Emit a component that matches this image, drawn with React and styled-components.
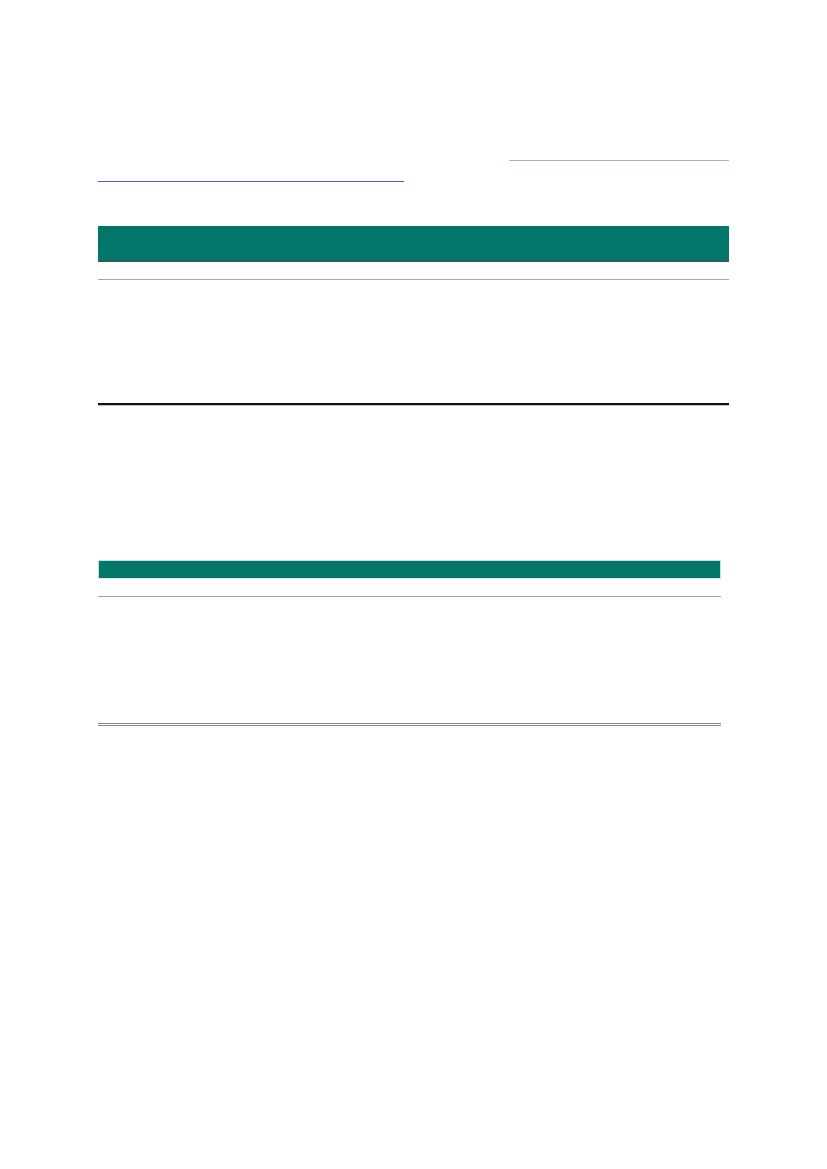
import React from "react";
import styled, { createGlobalStyle } from "styled-components";

const Global = createGlobalStyle`
  html, body { margin: 0; padding: 0; background: #ffffff; }
  body { font-family: "Liberation Sans", Arial, sans-serif; }
`;

const Page = styled.div`
  width: 827px;
  min-height: 1169px;
  box-sizing: border-box;
  padding: 148px 98px 0 98px;
  display: flex;
  flex-direction: column;
`;

const Para = styled.div`
  display: flex;
  flex-direction: column;
`;

const Line = styled.div`
  height: 21px;
  display: flex;
  justify-content: ${(p) => (p.$end ? "flex-end" : "flex-start")};
  align-items: flex-end;
`;

const Link = styled.span`
  display: inline-block;
  width: ${(p) => p.$w}px;
  height: 0;
  margin-bottom: 8px;
  border-bottom: 1px solid ${(p) => p.$c};
`;

const Table = styled.div`
  width: ${(p) => p.$w}px;
  margin-top: ${(p) => p.$mt}px;
  display: grid;
  grid-template-columns: ${(p) => p.$cols};
`;

const Head = styled.div`
  grid-column: 1 / -1;
  height: ${(p) => p.$h}px;
  background: #027769;
  box-sizing: border-box;
  border: ${(p) => (p.$light ? "1px solid #bfe4e0" : "none")};
  border-bottom: ${(p) => (p.$light ? "1px solid #cfeae6" : "1px solid #4a4a4a")};
`;

const Cell = styled.div`
  height: ${(p) => p.$h}px;
  box-sizing: border-box;
  border-bottom: ${(p) => p.$border};
  box-shadow: ${(p) => p.$shadow || "none"};
`;

function Rows({ cols, h1, h2, b1, b2, s2 }) {
  return (
    <>
      {cols.map((_, i) => (
        <Cell key={"a" + i} $h={h1} $border={b1} />
      ))}
      {cols.map((_, i) => (
        <Cell key={"b" + i} $h={h2} $border={b2} $shadow={s2} />
      ))}
    </>
  );
}

export default function App() {
  return (
    <Page>
      <Global />
      <Para>
        <Line $end>
          <Link $w={220} $c="#a8a8f4" />
        </Line>
        <Line>
          <Link $w={306} $c="#5454dc" />
        </Line>
      </Para>

      <Table $w={631} $mt={36} $cols="306px 161px 1fr">
        <Head $h={36} />
        <Rows
          cols={[0, 1, 2]}
          h1={18}
          h2={125}
          b1="1px solid #a6a6a6"
          b2="2px solid #111111"
          s2="0 1px 0 #c4c4c4"
        />
      </Table>

      <Table $w={623} $mt={155} $cols="322px 152px 1fr">
        <Head $h={19} $light />
        <Rows
          cols={[0, 1, 2]}
          h1={18}
          h2={129}
          b1="1px solid #a6a6a6"
          b2="3px double #8a8a8a"
        />
      </Table>
    </Page>
  );
}
